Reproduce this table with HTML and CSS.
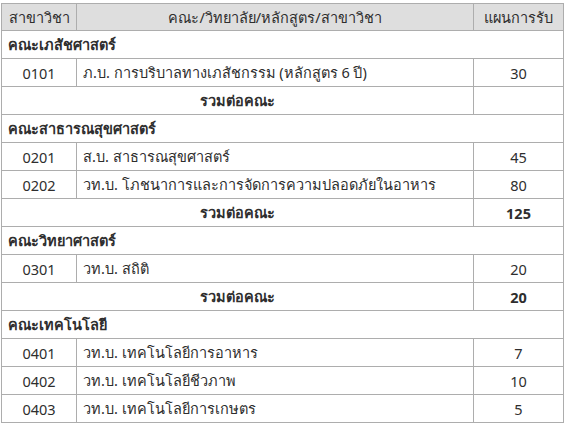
FILE: index.html
```html
<!DOCTYPE html>
<html lang="th">
<head>
<meta charset="utf-8">
<link rel="stylesheet" href="styles.css">
</head>
<body>
<table class="plan">
  <colgroup>
    <col class="c-code">
    <col class="c-name">
    <col class="c-num">
  </colgroup>
  <thead>
    <tr class="head">
      <th>สาขาวิชา</th>
      <th>คณะ/วิทยาลัย/หลักสูตร/สาขาวิชา</th>
      <th>แผนการรับ</th>
    </tr>
  </thead>
  <tbody>
    <tr class="faculty"><td colspan="3">คณะเภสัชศาสตร์</td></tr>
    <tr><td class="code">0101</td><td class="name">ภ.บ. การบริบาลทางเภสัชกรรม (หลักสูตร 6 ปี)</td><td class="num">30</td></tr>
    <tr class="total"><td colspan="2">รวมต่อคณะ</td><td class="num"></td></tr>

    <tr class="faculty"><td colspan="3">คณะสาธารณสุขศาสตร์</td></tr>
    <tr><td class="code">0201</td><td class="name">ส.บ. สาธารณสุขศาสตร์</td><td class="num">45</td></tr>
    <tr><td class="code">0202</td><td class="name">วท.บ. โภชนาการและการจัดการความปลอดภัยในอาหาร</td><td class="num">80</td></tr>
    <tr class="total"><td colspan="2">รวมต่อคณะ</td><td class="num">125</td></tr>

    <tr class="faculty"><td colspan="3">คณะวิทยาศาสตร์</td></tr>
    <tr><td class="code">0301</td><td class="name">วท.บ. สถิติ</td><td class="num">20</td></tr>
    <tr class="total"><td colspan="2">รวมต่อคณะ</td><td class="num">20</td></tr>

    <tr class="faculty"><td colspan="3">คณะเทคโนโลยี</td></tr>
    <tr><td class="code">0401</td><td class="name">วท.บ. เทคโนโลยีการอาหาร</td><td class="num">7</td></tr>
    <tr><td class="code">0402</td><td class="name">วท.บ. เทคโนโลยีชีวภาพ</td><td class="num">10</td></tr>
    <tr><td class="code">0403</td><td class="name">วท.บ. เทคโนโลยีการเกษตร</td><td class="num">5</td></tr>
  </tbody>
</table>
</body>
</html>
```

FILE: styles.css
```css
html, body {
  background: #ffffff;
}
body {
  margin: 3px 0 0 1px;
  font-family: "Noto Sans", sans-serif;
  font-size: 14.5px;
  color: #2e2e2e;
}
.plan {
  border-collapse: collapse;
  table-layout: fixed;
  width: 562px;
}
.c-code { width: 75px; }
.c-name { width: 397px; }
.c-num { width: 90px; }
.plan th,
.plan td {
  border: 1px solid #adadad;
  height: 28px;
  padding: 0 6px;
  box-sizing: border-box;
  white-space: nowrap;
  vertical-align: middle;
}
.head th {
  height: 27px;
  background: #dedede;
  font-weight: normal;
  text-align: center;
}
.faculty td {
  font-weight: bold;
  text-align: left;
}
.code { text-align: center; }
.name { text-align: left; }
.num { text-align: center; }
.total td {
  font-weight: bold;
  text-align: center;
}
```
